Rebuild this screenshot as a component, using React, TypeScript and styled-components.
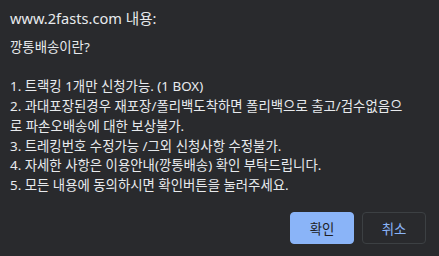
import React from "react";
import styled, { createGlobalStyle } from "styled-components";

const Global = createGlobalStyle`
  html, body { margin: 0; padding: 0; background: #292a2d; }
  #root { width: 439px; height: 256px; }
`;

const Dialog = styled.div`
  box-sizing: border-box;
  width: 439px;
  height: 256px;
  background: #292a2d;
  color: #e8eaed;
  font-family: "Noto Sans", "Noto Sans CJK KR", sans-serif;
  display: flex;
  flex-direction: column;
  padding: 8px 13px 12px 10px;
`;

const Title = styled.div`
  font-size: 14.6px;
  line-height: 20px;
  font-family: "Noto Sans", "Noto Sans CJK KR", sans-serif;
`;

const Message = styled.div`
  margin-top: 10px;
  font-size: 13.4px;
  line-height: 19.7px;
  white-space: pre;
`;

const Footer = styled.div`
  margin-top: auto;
  display: flex;
  justify-content: flex-end;
  gap: 8px;
`;

const Button = styled.button<{ $primary?: boolean }>`
  box-sizing: border-box;
  width: 64px;
  height: 32px;
  border-radius: 4px;
  font-family: "Noto Sans CJK KR", sans-serif;
  font-size: 13.4px;
  cursor: pointer;
  border: 1px solid ${(p) => (p.$primary ? "#8ab4f8" : "#3c4043")};
  background: ${(p) => (p.$primary ? "#8ab4f8" : "transparent")};
  color: ${(p) => (p.$primary ? "#202124" : "#8ab4f8")};
  padding: 0;
`;

const lines = [
  "깡통배송이란?",
  "",
  "1. 트랙킹 1개만 신청가능. (1 BOX)",
  "2. 과대포장된경우 재포장/폴리백도착하면 폴리백으로 출고/검수없음으",
  "로 파손오배송에 대한 보상불가.",
  "3. 트레킹번호 수정가능 /그외 신청사항 수정불가.",
  "4. 자세한 사항은 이용안내(깡통배송) 확인 부탁드립니다.",
  "5. 모든 내용에 동의하시면 확인버튼을 눌러주세요.",
];

export default function App() {
  return (
    <>
      <Global />
      <Dialog>
        <Title>www.2fasts.com 내용:</Title>
        <Message>{lines.join("\n")}</Message>
        <Footer>
          <Button $primary>확인</Button>
          <Button>취소</Button>
        </Footer>
      </Dialog>
    </>
  );
}
